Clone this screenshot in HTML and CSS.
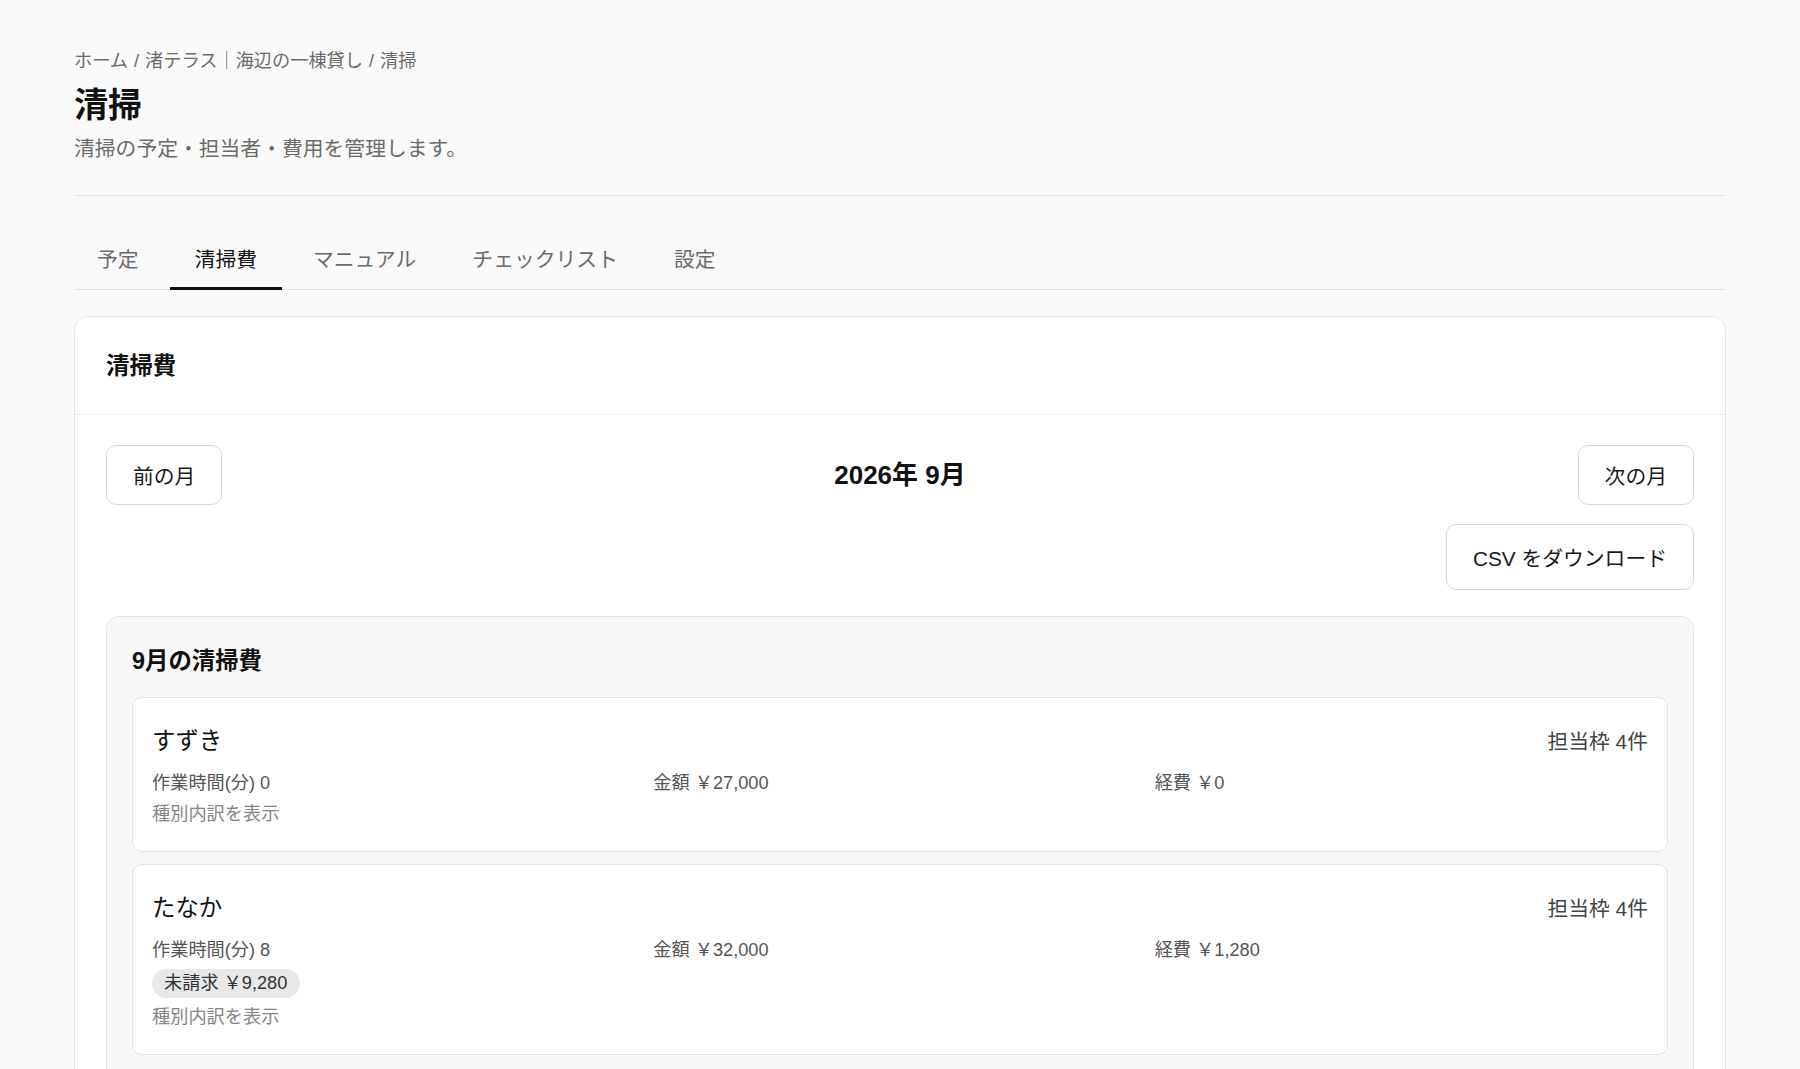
FILE: index.html
```html
<!DOCTYPE html>
<html lang="ja">
<head>
<meta charset="utf-8">
<title>清掃 - 渚テラス｜海辺の一棟貸し</title>
<link rel="stylesheet" href="styles.css">
</head>
<body>
<div class="page">
  <header class="page-head">
    <nav class="crumbs">
      <span>ホーム</span><span class="sep">/</span><span>渚テラス｜海辺の一棟貸し</span><span class="sep">/</span><span>清掃</span>
    </nav>
    <h1 class="page-title">清掃</h1>
    <p class="page-sub">清掃の予定・担当者・費用を管理します。</p>
  </header>

  <div class="tabs">
    <a class="tab">予定</a>
    <a class="tab is-active">清掃費</a>
    <a class="tab">マニュアル</a>
    <a class="tab">チェックリスト</a>
    <a class="tab">設定</a>
  </div>

  <section class="card">
    <div class="card-head">清掃費</div>
    <div class="card-body">
      <div class="month-nav">
        <button class="btn btn-nav">前の月</button>
        <div class="month-label">2026年 9月</div>
        <button class="btn btn-nav">次の月</button>
      </div>
      <div class="actions">
        <button class="btn btn-csv">CSV をダウンロード</button>
      </div>

      <div class="summary">
        <h2 class="summary-title">9月の清掃費</h2>
        <div class="staff-list">
          <article class="staff">
            <div class="staff-top">
              <span class="staff-name">すずき</span>
              <span class="staff-count">担当枠 4件</span>
            </div>
            <div class="staff-stats">
              <span>作業時間(分) 0</span>
              <span>金額 ￥27,000</span>
              <span>経費 ￥0</span>
            </div>
            <div class="staff-extra">
              <span class="staff-link">種別内訳を表示</span>
            </div>
          </article>
          <article class="staff">
            <div class="staff-top">
              <span class="staff-name">たなか</span>
              <span class="staff-count">担当枠 4件</span>
            </div>
            <div class="staff-stats">
              <span>作業時間(分) 8</span>
              <span>金額 ￥32,000</span>
              <span>経費 ￥1,280</span>
            </div>
            <div class="staff-extra">
              <span class="pill">未請求 ￥9,280</span>
              <span class="staff-link">種別内訳を表示</span>
            </div>
          </article>
        </div>
      </div>
    </div>
  </section>
</div>
</body>
</html>
```

FILE: styles.css
```css
* { box-sizing: border-box; }

html, body {
  margin: 0;
  background: #fafafa;
  color: #111;
  font-family: "Liberation Sans", "Noto Sans CJK JP", sans-serif;
}

.page {
  padding: 48px 74px 40px;
}

/* page header */
.page-head {
  padding-bottom: 31px;
  border-bottom: 1px solid #e3e3e3;
}

.crumbs {
  font-size: 18.2px;
  line-height: 27px;
  color: #6b6b6b;
}
.crumbs .sep {
  margin: 0 6px;
}

.page-title {
  margin: 8px 0 0;
  font-size: 34px;
  line-height: 44px;
  font-weight: 700;
  color: #111;
}

.page-sub {
  margin: 6px 0 0;
  font-size: 20.8px;
  line-height: 31px;
  color: #6b6b6b;
}

/* tabs */
.tabs {
  display: flex;
  gap: 6px;
  margin-top: 36px;
  border-bottom: 1px solid #e3e3e3;
}
.tab {
  padding: 12px 25px;
  font-size: 20.8px;
  line-height: 31px;
  color: #6b6b6b;
  border-bottom: 3px solid transparent;
  margin-bottom: -1px;
}
.tab:first-child {
  margin-left: -2px;
}
.tab.is-active {
  color: #111;
  border-bottom-color: #111;
}

/* main card */
.card {
  margin-top: 26px;
  background: #fff;
  border: 1px solid #e5e5e5;
  border-radius: 14px;
}
.card-head {
  padding: 33px 31px 31px;
  font-size: 23.4px;
  line-height: 33px;
  font-weight: 700;
  border-bottom: 1px solid #efefef;
}
.card-body {
  padding: 30px 31px 31px;
}

.month-nav {
  display: flex;
  align-items: center;
  justify-content: space-between;
}
.month-label {
  font-size: 26px;
  font-weight: 700;
  line-height: 34px;
}

.btn {
  font-family: inherit;
  font-size: 20.8px;
  color: #1a1a1a;
  background: #fff;
  border: 1px solid #d6d6d6;
  border-radius: 10px;
  padding: 0 26px;
  cursor: pointer;
}
.btn-nav { height: 60px; }
.btn-csv { height: 66px; }

.actions {
  display: flex;
  justify-content: flex-end;
  margin-top: 19px;
}

/* monthly summary */
.summary {
  margin-top: 26px;
  background: #f8f8f8;
  border: 1px solid #e5e5e5;
  border-radius: 13px;
  padding: 28px 25px 26px;
}
.summary-title {
  margin: 0;
  font-size: 23.4px;
  line-height: 33px;
  font-weight: 700;
}
.staff-list {
  display: flex;
  flex-direction: column;
  gap: 12px;
  margin-top: 19px;
}

.staff {
  background: #fff;
  border: 1px solid #e3e3e3;
  border-radius: 10px;
  padding: 27px 19px 24px;
}
.staff-top {
  display: flex;
  justify-content: space-between;
  align-items: center;
}
.staff-name {
  font-size: 23.4px;
  line-height: 33px;
  color: #111;
}
.staff-count {
  font-size: 20.8px;
  line-height: 33px;
  color: #444;
}
.staff-stats {
  display: grid;
  grid-template-columns: repeat(3, 1fr);
  column-gap: 8px;
  margin-top: 13px;
  font-size: 18.2px;
  line-height: 25px;
  color: #555;
}
.staff-extra {
  display: flex;
  flex-direction: column;
  align-items: flex-start;
  gap: 7px;
  margin-top: 6px;
  font-size: 18.2px;
  line-height: 25px;
}
.staff-link {
  color: #858585;
}
.pill {
  background: #e8e8e8;
  color: #333;
  border-radius: 999px;
  padding: 2px 13px 2px 12px;
}
```
